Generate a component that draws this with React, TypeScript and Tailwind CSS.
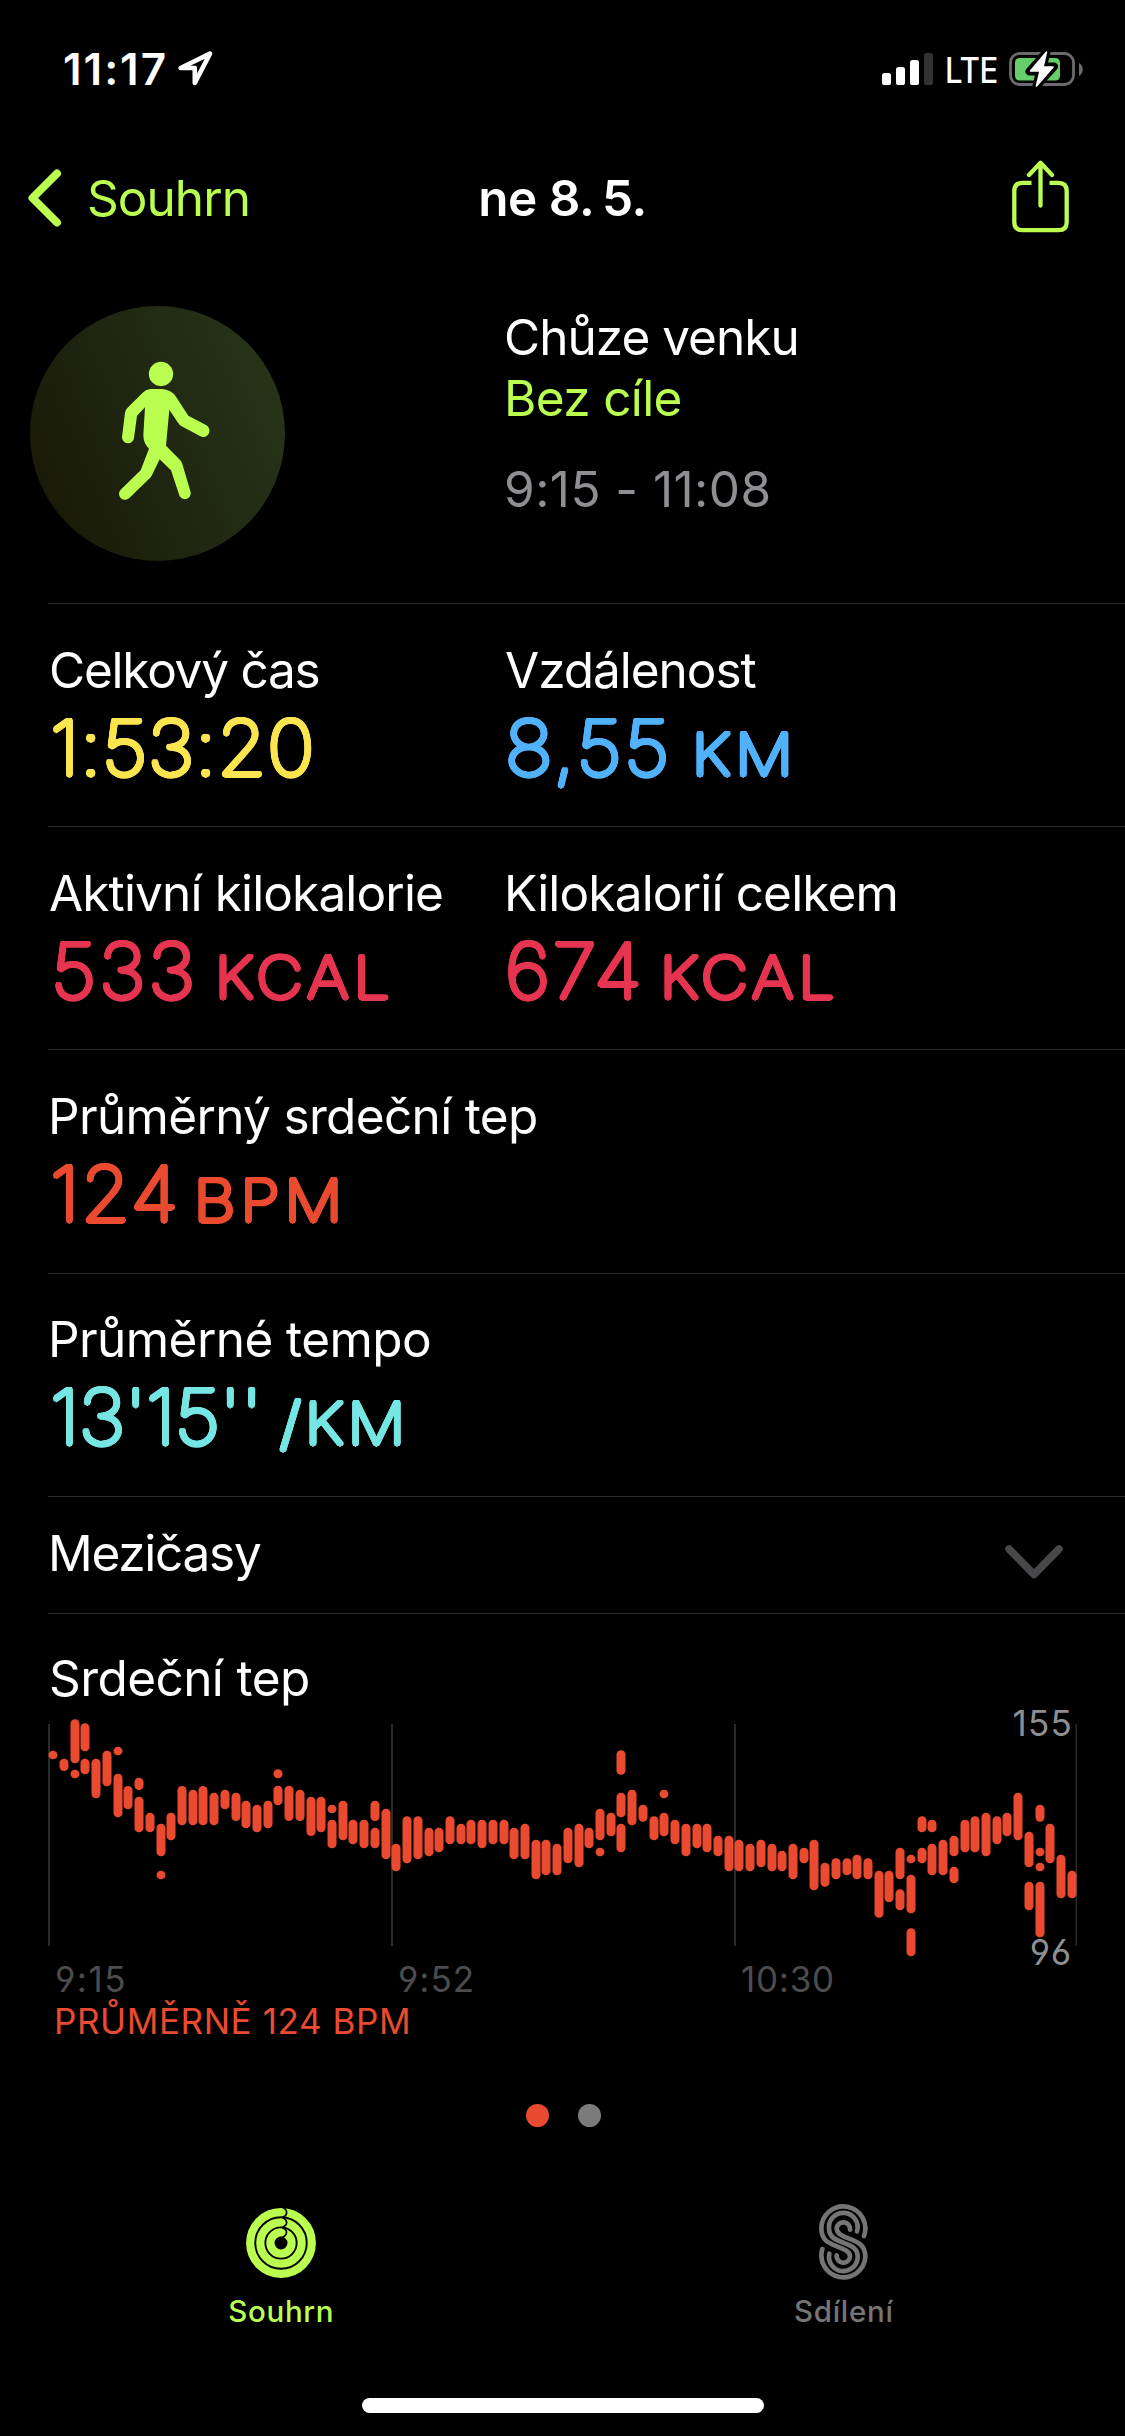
import React from 'react';

/* Thin strokes thickened by a ring of shadows give the digits round terminals. */
const ROUNDED =
  'font-thin [text-shadow:2.4px_0_currentColor,2.2px_0.9px_currentColor,1.7px_1.7px_currentColor,0.9px_2.2px_currentColor,0_2.5px_currentColor,-0.9px_2.2px_currentColor,-1.7px_1.7px_currentColor,-2.2px_0.9px_currentColor,-2.4px_0_currentColor,-2.2px_-0.9px_currentColor,-1.7px_-1.7px_currentColor,-0.9px_-2.2px_currentColor,0_-2.5px_currentColor,0.9px_-2.2px_currentColor,1.7px_-1.7px_currentColor,2.2px_-0.9px_currentColor]';

const SMALL = "text-[35px] leading-[42px] [font-feature-settings:'cv03','cv04']";

function StatusBar() {
  return (
    <div className="flex h-[138px] shrink-0 items-center pl-[63px] pr-[42px] text-white">
      <span className="text-[44px] leading-none font-semibold tracking-[1.96px]">11:17</span>
      <svg viewBox="0 0 38 38" className="ml-[8px] h-[38px] w-[38px]" fill="none" stroke="currentColor" strokeWidth="4.6" strokeLinejoin="round">
        <path d="M34 3.6 L4.6 18 H18.8 V33 Z" />
      </svg>
      <div className="ml-auto flex items-center">
        <svg viewBox="0 0 52 32" className="h-8 w-[52px]" fill="currentColor">
          <rect x="0" y="20" width="9" height="12" rx="2.6" />
          <rect x="14" y="14" width="9" height="18" rx="2.6" />
          <rect x="28" y="7" width="9" height="25" rx="2.6" />
          <rect x="42" y="0" width="9" height="32" rx="2.6" fill="#333333" />
        </svg>
        <span className="ml-[11px] mt-0.5 inline-block w-[64px] origin-left scale-x-[0.89] text-[35px] leading-none font-medium tracking-[-0.3px]">LTE</span>
        <svg viewBox="0 0 74 38" className="h-[38px] w-[74px]">
          <rect x="1.5" y="3.5" width="63" height="31" rx="9" fill="none" stroke="#6b6b6b" strokeWidth="2.8" />
          <path d="M70 13 C75 15.5 75 23.5 70 26 Z" fill="#6b6b6b" />
          <rect x="6" y="8" width="45" height="22.5" rx="4.5" fill="#65ce67" />
          <path d="M37.5 2 L20.5 21.5 H31 L27.5 36 L45 16.5 H34 Z" fill="#000" stroke="#000" strokeWidth="8" strokeLinejoin="round" />
          <path d="M37.5 2 L21.5 21 H31 L27.5 36 L44 17 H34 Z" fill="#fff" stroke="#fff" strokeWidth="1.6" strokeLinejoin="round" />
        </svg>
      </div>
    </div>
  );
}

function NavBar() {
  return (
    <div className="grid h-[120px] shrink-0 grid-cols-[1fr_auto_1fr] items-center text-[49.5px] leading-[60px]">
      <div className="flex items-center text-[#baff4f]">
        <svg viewBox="0 0 34 58" className="ml-7 h-[58px] w-[34px]" fill="none" stroke="currentColor" strokeWidth="8" strokeLinecap="round" strokeLinejoin="round">
          <path d="M29 4.5 L4.5 29 L29 53.5" />
        </svg>
        <span className="ml-[25px] tracking-[-0.95px]">Souhrn</span>
      </div>
      <h1 className="font-semibold tracking-[-0.5px] text-white">ne 8.{'\u2009'}5.</h1>
      <svg viewBox="0 0 57 73" className="mr-[56px] mb-1 h-[73px] w-[57px] justify-self-end text-[#baff4f]" fill="none" stroke="currentColor" strokeWidth="4.3" strokeLinecap="round" strokeLinejoin="round">
        <path strokeLinecap="butt" d="M19.5 22.8 H10.5 Q2.3 22.8 2.3 31 V62 Q2.3 70.2 10.5 70.2 H46.5 Q54.7 70.2 54.7 62 V31 Q54.7 22.8 46.5 22.8 H37.5" />
        <path d="M28.5 45.5 V3 M17 15 L28.5 2.8 L40 15" />
      </svg>
    </div>
  );
}

function Walker() {
  return (
    <svg viewBox="90 78 765 765" className="ml-[30px] mt-12 h-[255px] w-[255px]">
      <defs>
        <linearGradient id="disc" x1="0" y1="0.72" x2="1" y2="0.3">
          <stop offset="0" stopColor="#191a07" />
          <stop offset="0.5" stopColor="#202712" />
          <stop offset="1" stopColor="#283418" />
        </linearGradient>
      </defs>
      <circle cx="472.5" cy="460.5" r="382.5" fill="url(#disc)" />
      <g fill="#baff4f">
        <circle cx="483" cy="282" r="36.5" />
        <path d="M452 327 H486 Q514 329 528 350 L565 407 L618 435 A18 18 0 0 1 601 469 L545 439 Q538 435 533 427 L508 389 L498 497 L541 541 Q545 546 547 552 L572 637 A18 18 0 0 1 539 649 L513 571 L479 538 L455 587 Q453 591 449 595 L388 654 A18 18 0 0 1 362 629 L422 571 L447 506 Q430 490 430 466 L435 382 L411 407 L402 473 A18 18 0 0 1 366 471 L375 398 Q376 390 382 384 L428 338 Q438 328 452 327 Z" />
      </g>
    </svg>
  );
}

function Hero() {
  return (
    <div className="grid h-[345px] shrink-0 grid-cols-[504px_1fr]">
      <Walker />
      <div className="pt-[49px] text-[49.5px] leading-[60px]">
        <p className="text-white tracking-[-0.98px]">Chůze venku</p>
        <p className="mt-[1px] text-[#baff4f] tracking-[-0.65px]">Bez cíle</p>
        <p className="mt-[31px] text-[#8e8e93] tracking-[0.45px]">9:15 - 11:08</p>
      </div>
    </div>
  );
}

type MetricData = {
  label: string;
  labelCls: string;
  value: string;
  valueCls: string;
  unit?: string;
  unitCls?: string;
  color: string;
};

function Metric({ m }: { m: MetricData }) {
  return (
    <div>
      <p className={`text-[49.5px] leading-[60px] whitespace-nowrap text-white ${m.labelCls}`}>{m.label}</p>
      <p className={`flex h-24 items-baseline text-[75.5px] leading-24 whitespace-nowrap ${ROUNDED} ${m.color}`}>
        <span className={`shrink-0 origin-left scale-x-[1.06] ${m.valueCls}`}>{m.value}</span>
        {m.unit && <span className={`origin-left scale-x-[1.12] text-[57.5px] leading-none ${m.unitCls}`}>{m.unit}</span>}
      </p>
    </div>
  );
}

const rows: { h: string; items: MetricData[] }[] = [
  {
    h: 'h-[223px] pt-[36px]',
    items: [
      { label: 'Celkový čas', labelCls: 'ml-[1px] tracking-[-1.23px]', value: '1:53:20', valueCls: 'ml-[2px] tracking-[0.5px]', color: 'text-[#fbe550]' },
      { label: 'Vzdálenost', labelCls: 'ml-[1px] tracking-[-1.02px]', value: '8,55', valueCls: 'ml-[1.3px] w-[187px] tracking-[2.4px]', unit: 'KM', unitCls: 'tracking-[4.2px]', color: 'text-[#51b2fb]' },
    ],
  },
  {
    h: 'h-[223px] pt-[36px]',
    items: [
      { label: 'Aktivní kilokalorie', labelCls: 'ml-[1px] tracking-[-0.85px]', value: '533', valueCls: 'ml-[2.5px] w-[164px] tracking-[2.7px]', unit: 'KCAL', unitCls: 'tracking-[4.5px]', color: 'text-[#e63551]' },
      { label: 'Kilokalorií celkem', labelCls: 'tracking-[-0.83px]', value: '674', valueCls: 'ml-[1.3px] w-[155px] tracking-[2.3px]', unit: 'KCAL', unitCls: 'tracking-[4.4px]', color: 'text-[#e63551]' },
    ],
  },
  {
    h: 'h-[224px] pt-[36px]',
    items: [
      { label: 'Průměrný srdeční tep', labelCls: 'tracking-[-0.66px]', value: '124', valueCls: 'ml-[1.7px] w-[144.5px] tracking-[1.3px]', unit: 'BPM', unitCls: 'tracking-[4.6px]', color: 'text-[#ea4b30]' },
    ],
  },
  {
    h: 'h-[223px] pt-[35px]',
    items: [
      { label: 'Průměrné tempo', labelCls: 'tracking-[-0.57px]', value: "13'15''", valueCls: 'ml-[1.7px] w-[229.9px] tracking-[-0.6px]', unit: '/KM', unitCls: 'tracking-[3.7px]', color: 'text-[#76e6e3]' },
    ],
  },
];

/* Heart rate ranges per time slot, [top, bottom] in thirds of a pixel. */
const beats: number[][] = [
  [212, 238], [236, 273], [118, 250, 269, 295], [130, 214, 236, 283], [236, 355], [212, 319], [200, 226, 281, 412], [318, 388],
  [293, 330, 350, 457], [398, 457], [431, 529, 572, 598], [398, 481], [318, 436], [329, 436], [318, 436], [338, 436],
  [329, 388], [338, 423], [362, 445], [374, 457], [362, 445], [268, 295, 317, 376], [317, 423], [329, 423],
  [350, 468], [350, 457], [374, 400, 419, 505], [362, 481], [419, 493], [419, 505], [362, 423, 443, 505], [386, 538],
  [491, 574], [409, 550], [409, 538], [443, 529], [443, 517], [409, 493], [431, 493], [419, 493],
  [419, 505], [419, 493], [419, 493], [443, 538], [431, 538], [479, 598], [479, 586], [491, 586],
  [443, 550], [431, 562], [443, 505], [386, 481, 503, 529], [398, 469], [211, 284, 338, 412, 431, 517], [329, 436], [374, 425],
  [409, 481], [329, 355, 398, 469], [419, 493], [431, 529], [431, 505], [431, 517], [467, 529], [467, 574],
  [479, 574], [491, 574], [479, 562], [491, 574], [512, 574], [491, 598], [503, 550], [479, 631],
  [548, 620], [535, 598], [535, 586], [524, 598], [535, 598], [572, 713], [572, 667], [503, 598, 628, 691],
  [524, 550, 584, 700, 745, 829], [409, 457, 503, 550], [419, 457, 491, 586], [479, 586], [467, 529, 560, 610], [419, 517], [409, 517], [398, 529],
  [409, 493], [398, 469], [338, 481], [455, 562, 605, 691], [374, 425, 503, 529, 548, 574, 605, 772], [431, 550], [524, 655], [572, 655],
];

function HeartChart() {
  return (
    <div className="relative h-[250px] w-[1030px]">
      <svg viewBox="48 1708 1030 250" className="block h-[250px] w-[1030px]">
        <g fill="#2a2a2a">
          <rect x="48" y="1724" width="2" height="222" />
          <rect x="391" y="1724" width="2" height="222" />
          <rect x="734" y="1724" width="2" height="222" />
          <rect x="1075.5" y="1724" width="1.5" height="222" />
        </g>
        <g fill="#ea4b30">
          {beats.flatMap((b, i) => {
            const x = Math.round(53.3 + i * 10.72) - 4.5;
            const segs = [];
            for (let k = 0; k < b.length; k += 2) {
              segs.push(<rect key={`${i}-${k}`} x={x} y={1680 + b[k] / 3} width="9" height={(b[k + 1] - b[k]) / 3} rx="4.4" />);
            }
            return segs;
          })}
        </g>
      </svg>
      <span className={`absolute right-[5px] top-[-6px] text-[#8e8e93] tracking-[1.2px] ${SMALL}`}>155</span>
      <span className={`absolute right-[6px] top-[223px] text-[#8e8e93] tracking-[1px] ${SMALL}`}>96</span>
    </div>
  );
}

function RingsIcon() {
  return (
    <svg viewBox="0 0 70 70" className="h-[70px] w-[70px]" fill="none">
      <g stroke="#baff4f">
        <circle cx="35" cy="35" r="30.8" strokeWidth="8.2" />
        <circle cx="35" cy="35" r="20.7" strokeWidth="8.2" />
        <circle cx="35" cy="35" r="10.6" strokeWidth="8.2" />
      </g>
      <g stroke="#000" strokeWidth="1.7">
        <path d="M36.5 -0.5 C42 1.5 42 7.5 36.5 9.2" />
        <path d="M36.5 9.8 C42 11.8 42 17.3 36.5 19" />
        <path d="M36.5 19.8 C42 21.8 42 27.3 35.5 29.5" />
      </g>
    </svg>
  );
}

function SharingIcon() {
  return (
    <svg viewBox="60 30 146 232" className="h-[77.4px] w-[48.7px]" fill="none" stroke="currentColor" strokeWidth="14" strokeLinecap="round">
      <path d="M195 126 A66 66 0 1 0 67 103 C67 144 96 149 118 159 C140 168 153 173 153 188 A20 20 0 1 1 113 184" />
      <path d="M174 112 A43 43 0 1 0 90 103 C90 130 108 136 133 146 C158 156 176 162 176 189 A43 43 0 1 1 91 179" />
      <path d="M153 107 A20 20 0 1 0 113 103 C113 118 126 124 148 133 C170 143 199 148 199 189 A66 66 0 1 1 70 165" />
    </svg>
  );
}

export default function App() {
  return (
    <div className="flex h-[2436px] w-[1125px] flex-col overflow-hidden bg-black font-['Inter',sans-serif]">
      <StatusBar />
      <NavBar />
      <Hero />
      {rows.map((r) => (
        <div key={r.items[0].label} className={`ml-12 grid shrink-0 grid-cols-[456px_1fr] border-t border-[#2c2c2e] ${r.h}`}>
          {r.items.map((m) => (
            <Metric key={m.label} m={m} />
          ))}
        </div>
      ))}
      <div className="ml-12 flex h-[117px] shrink-0 items-center justify-between border-t border-[#2c2c2e] pr-[62px]">
        <span className="mb-1 text-[49.5px] leading-[60px] tracking-[-1.27px] text-white">Mezičasy</span>
        <svg viewBox="0 0 58 34" className="mt-[13px] h-[34px] w-[58px]" fill="none" stroke="#48484a" strokeWidth="7.5" strokeLinecap="round" strokeLinejoin="round">
          <path d="M4 4 L29 29.5 L54 4" />
        </svg>
      </div>
      <div className="ml-12 shrink-0 border-t border-[#2c2c2e] pt-[34px]">
        <h2 className="ml-[1px] text-[49.5px] leading-[60px] tracking-[-0.57px] text-white">Srdeční tep</h2>
        <HeartChart />
        <div className={`grid grid-cols-[343px_343px_1fr] pl-[7px] text-[#4c4c4e] ${SMALL}`}>
          <span className="tracking-[1.5px]">9:15</span>
          <span className="tracking-[1px]">9:52</span>
          <span className="tracking-[0.75px]">10:30</span>
        </div>
        <p className={`pl-1.5 tracking-[0.59px] text-[#ea4b30] ${SMALL}`}>PRŮMĚRNĚ 124 BPM</p>
      </div>
      <div className="mt-[62px] ml-[1px] flex shrink-0 justify-center gap-[29px]">
        <span className="h-[23px] w-[23px] rounded-full bg-[#ea4b30]" />
        <span className="h-[23px] w-[23px] rounded-full bg-[#7b7b7b]" />
      </div>
      <div className="mt-[77px] grid h-[194px] shrink-0 grid-cols-2 text-[29.5px] leading-9 font-medium">
        <div className="flex flex-col items-center text-[#baff4f]">
          <div className="flex h-[78px] items-center"><RingsIcon /></div>
          <span className="mt-[11px] tracking-[0.67px]">Souhrn</span>
        </div>
        <div className="flex flex-col items-center text-[#757575]">
          <div className="flex h-[78px] items-center"><SharingIcon /></div>
          <span className="mt-[11px] tracking-[0.71px]">Sdílení</span>
        </div>
      </div>
      <div className="mx-auto h-[15px] w-[402px] shrink-0 rounded-full bg-white" />
    </div>
  );
}
